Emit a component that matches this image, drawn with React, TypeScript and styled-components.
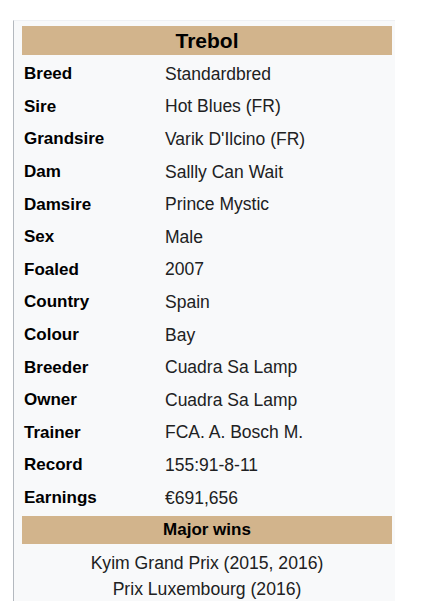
import React from 'react';
import styled, { createGlobalStyle } from 'styled-components';

const GlobalStyle = createGlobalStyle`
  html, body {
    margin: 0;
    padding: 0;
    background: #ffffff;
  }
  body {
    font-family: "Liberation Sans", Arial, sans-serif;
    color: #000;
  }
`;

// Styled components
const Page = styled.div`
  padding: 20px 0 0 13px;
  height: 601px;
  box-sizing: border-box;
  overflow: hidden;
`;

const Infobox = styled.div`
  width: 382px;
  box-sizing: border-box;
  background-color: #f8f9fa;
  border-left: 1px solid #b4b9bf;
  border-top: 1px solid #eef0f3;
  padding: 5px 3px 40px 8px;
`;

const Heading = styled.div<{ $size: number; $height: number }>`
  background-color: #d2b48c;
  height: ${props => props.$height}px;
  display: flex;
  align-items: center;
  justify-content: center;
  font-weight: bold;
  font-size: ${props => props.$size}px;
  color: #000;
`;

const Rows = styled.div`
  display: flex;
  flex-direction: column;
  margin: 3px 0 2px;
`;

const Row = styled.div`
  display: grid;
  grid-template-columns: 143px 1fr;
  align-items: center;
  height: 32.6px;
`;

const Label = styled.div`
  font-weight: bold;
  font-size: 17px;
  padding-left: 2px;
  color: #000;
`;

const Value = styled.div`
  font-size: 17.5px;
  color: #202122;
`;

const Wins = styled.div`
  padding-top: 6px;
  display: flex;
  flex-direction: column;
  align-items: center;
  font-size: 17.6px;
  line-height: 26px;
  color: #202122;
`;

const rows: [string, string][] = [
  ['Breed', 'Standardbred'],
  ['Sire', 'Hot Blues (FR)'],
  ['Grandsire', "Varik D'Ilcino (FR)"],
  ['Dam', 'Sallly Can Wait'],
  ['Damsire', 'Prince Mystic'],
  ['Sex', 'Male'],
  ['Foaled', '2007'],
  ['Country', 'Spain'],
  ['Colour', 'Bay'],
  ['Breeder', 'Cuadra Sa Lamp'],
  ['Owner', 'Cuadra Sa Lamp'],
  ['Trainer', 'FCA. A. Bosch M.'],
  ['Record', '155:91-8-11'],
  ['Earnings', '€691,656'],
];

const App: React.FC = () => {
  return (
    <>
      <GlobalStyle />
      <Page>
        <Infobox>
          <Heading $size={21} $height={29}>Trebol</Heading>
          <Rows>
            {rows.map(([label, value]) => (
              <Row key={label}>
                <Label>{label}</Label>
                <Value>{value}</Value>
              </Row>
            ))}
          </Rows>
          <Heading $size={17} $height={28}>Major wins</Heading>
          <Wins>
            <span>Kyim Grand Prix (2015, 2016)</span>
            <span>Prix Luxembourg (2016)</span>
          </Wins>
        </Infobox>
      </Page>
    </>
  );
};

export default App;
